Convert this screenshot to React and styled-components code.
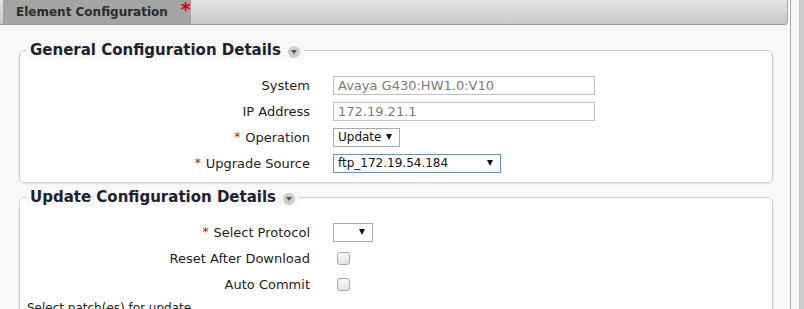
import React from 'react';
import styled, { createGlobalStyle } from 'styled-components';

const Global = createGlobalStyle`
    html, body {
        margin: 0;
        padding: 0;
        background: #f8f8f8;
        font-family: "DejaVu Sans", Verdana, sans-serif;
        color: #222;
    }
`

const Page = styled.div`
    display: flex;
    width: 804px;
    height: 309px;
    overflow: hidden;
`

const Main = styled.div`
    width: 790px;
    flex-shrink: 0;
    border-right: 1px solid #a9a9a9;
    background: #f8f8f8;
    display: flex;
    flex-direction: column;
`

const Gutter = styled.div`
    width: 8px;
    flex-shrink: 0;
    background: #f6f6f6;
`

const ScrollTrack = styled.div`
    flex: 1;
    background: #cbcbcb;
`

const Header = styled.div`
    display: flex;
    flex-shrink: 0;
    height: 25px;
    box-sizing: border-box;
    padding-left: 3px;
    background: linear-gradient(#e2e2e2, #c9c9c9);
    border-bottom: 1px solid #9a9a9a;
    border-right: 1px solid #a8a8a8;
    border-bottom-right-radius: 4px;
    margin-right: 2px;
`

const Tab = styled.div`
    display: flex;
    align-items: center;
    width: 188px;
    box-sizing: border-box;
    padding-left: 13px;
    background: #a4a4a4;
    font-size: 12px;
    font-weight: bold;
    color: #2b2b2b;
`

const TabStar = styled.span`
    color: #d40000;
    font-size: 19px;
    font-weight: bold;
    margin-left: 13px;
    align-self: flex-start;
    line-height: 19px;
`

const Content = styled.div`
    flex-shrink: 0;
    padding: 16px 17px 0 19px;
    display: flex;
    flex-direction: column;
    gap: 5px;
`

const Section = styled.fieldset`
    margin: 0;
    padding: 0 0 ${({ bottom }) => bottom}px 0;
    border: 1px solid #cfcfcf;
    border-radius: 5px;
    background: #fff;
    box-shadow: 0 1px 2px rgba(0, 0, 0, 0.08);
    min-width: 0;
`

const Legend = styled.legend`
    display: flex;
    align-items: center;
    gap: 7px;
    margin-left: 6px;
    padding: 0 4px;
    height: 18px;
    font-size: 15px;
    font-weight: bold;
    color: #1e2130;
    background: #f8f8f8;
`

const Toggle = styled.span`
    display: inline-flex;
    align-items: center;
    justify-content: center;
    width: 12px;
    height: 12px;
    border-radius: 50%;
    background: #cdcdcd;
    margin-top: 3px;

    &::after {
        content: "";
        border-left: 3.5px solid transparent;
        border-right: 3.5px solid transparent;
        border-top: 4px solid #555;
        margin-top: 1px;
    }
`

const Rows = styled.div`
    display: grid;
    grid-template-columns: 290px 1fr;
    column-gap: 23px;
    grid-auto-rows: 26px;
    padding-top: ${({ top }) => top}px;
`

const Label = styled.div`
    display: flex;
    align-items: center;
    justify-content: flex-end;
    font-size: 13px;
    color: #1c1c1c;
`

const Star = styled.span`
    color: #d00;
    margin-right: 5px;
    font-size: 12px;
`

const Cell = styled.div`
    display: flex;
    align-items: center;
`

const TextBox = styled.div`
    width: 262px;
    height: 19px;
    box-sizing: border-box;
    border: 1px solid #c2c2c2;
    background: #fff;
    padding-left: 4px;
    font-size: 13px;
    line-height: 17px;
    color: #7a7a7a;
`

const Select = styled.div`
    display: flex;
    align-items: center;
    width: ${({ w }) => w}px;
    height: 19px;
    box-sizing: border-box;
    border: 1px solid ${({ focus }) => (focus ? '#5b93d3' : '#a5abb4')};
    background: #fff;
    padding: 0 7px 0 4px;
    font-size: 12px;
    color: #111;

    &::after {
        content: "";
        margin-left: auto;
        border-left: 3px solid transparent;
        border-right: 3px solid transparent;
        border-top: 6px solid #111;
    }
`

const Check = styled.span`
    display: inline-block;
    width: 11px;
    height: 11px;
    margin-left: 4px;
    border: 1px solid #a8a8a8;
    border-radius: 3px;
    background: linear-gradient(#fafafa, #e2e2e2);
`

const Note = styled.div`
    padding: 4px 0 0 7px;
    font-size: 12px;
    color: #222;
`

const Field = ({ label, req, children }) => (
    <>
        <Label>
            {req && <Star>*</Star>}
            {label}
        </Label>
        <Cell>{children}</Cell>
    </>
)

const App = () => (
    <>
        <Global />
        <Page>
            <Main>
                <Header>
                    <Tab>
                        Element Configuration
                        <TabStar>*</TabStar>
                    </Tab>
                </Header>
                <Content>
                    <Section bottom={6}>
                        <Legend>General Configuration Details <Toggle /></Legend>
                        <Rows top={13}>
                            <Field label="System"><TextBox>Avaya G430:HW1.0:V10</TextBox></Field>
                            <Field label="IP Address"><TextBox>172.19.21.1</TextBox></Field>
                            <Field label="Operation" req><Select w={67}>Update</Select></Field>
                            <Field label="Upgrade Source" req><Select w={168} focus>ftp_172.19.54.184</Select></Field>
                        </Rows>
                    </Section>
                    <Section bottom={20}>
                        <Legend>Update Configuration Details <Toggle /></Legend>
                        <Rows top={13}>
                            <Field label="Select Protocol" req><Select w={40} /></Field>
                            <Field label="Reset After Download"><Check /></Field>
                            <Field label="Auto Commit"><Check /></Field>
                        </Rows>
                        <Note>Select patch(es) for update</Note>
                    </Section>
                </Content>
            </Main>
            <Gutter />
            <ScrollTrack />
        </Page>
    </>
)

export default App;
